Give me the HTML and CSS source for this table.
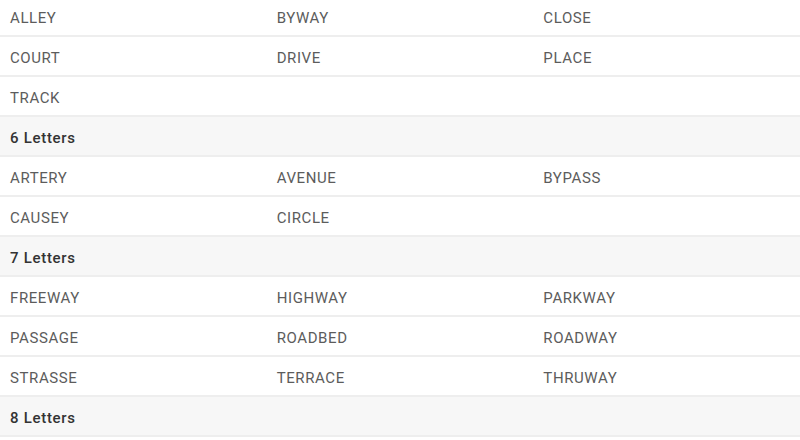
FILE: index.html
```html
<!DOCTYPE html>
<html>
<head>
<meta charset="utf-8">
<link rel="stylesheet" href="styles.css">
</head>
<body>
<div class="list">
  <div class="row"><span>ALLEY</span><span>BYWAY</span><span>CLOSE</span></div>
  <div class="row"><span>COURT</span><span>DRIVE</span><span>PLACE</span></div>
  <div class="row"><span>TRACK</span><span></span><span></span></div>
  <div class="row head"><span>6 Letters</span></div>
  <div class="row"><span>ARTERY</span><span>AVENUE</span><span>BYPASS</span></div>
  <div class="row"><span>CAUSEY</span><span>CIRCLE</span><span></span></div>
  <div class="row head"><span>7 Letters</span></div>
  <div class="row"><span>FREEWAY</span><span>HIGHWAY</span><span>PARKWAY</span></div>
  <div class="row"><span>PASSAGE</span><span>ROADBED</span><span>ROADWAY</span></div>
  <div class="row"><span>STRASSE</span><span>TERRACE</span><span>THRUWAY</span></div>
  <div class="row head"><span>8 Letters</span></div>
</div>
</body>
</html>
```
FILE: styles.css
```css
html, body {
  margin: 0;
  padding: 0;
  background: #fff;
  overflow: hidden;
}
.list {
  margin-top: -3px;
  font-family: Roboto, "Liberation Sans", sans-serif;
  font-size: 15px;
  letter-spacing: 0.6px;
  color: #5c5c5c;
}
.row {
  display: grid;
  grid-template-columns: 1fr 1fr 1fr;
  box-sizing: border-box;
  height: 40px;
  padding-top: 3px;
  align-items: center;
  border-bottom: 2px solid #eeeeee;
}
.row span {
  padding-left: 10px;
}
.row.head {
  background: #f7f7f7;
  color: #333;
  font-weight: 500;
  letter-spacing: 0.7px;
}
```
